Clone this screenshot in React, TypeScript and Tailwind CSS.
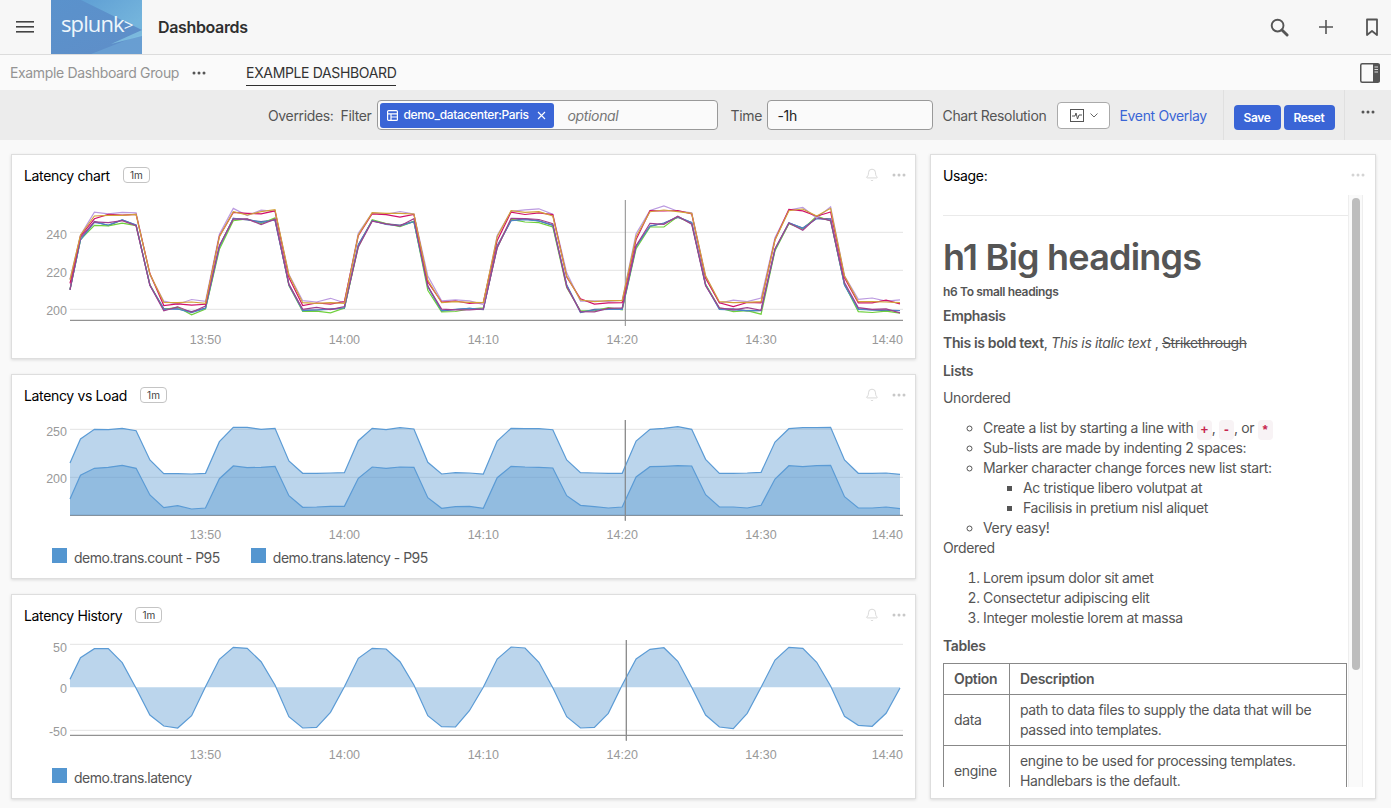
import { Bell } from "lucide-react";

const SANS = "font-['Inter','Noto_Sans',sans-serif] tracking-[-0.35px]";

// data is read off the picture, in page pixels (y), one value per minute
const xAt = (i: number) => (i === 0 ? 70 : 80.5 + (i - 1) * 13.89);
const toPoints = (ys: number[]) => ys.map((y, i) => `${xAt(i).toFixed(1)},${y}`).join(" ");
const toArea = (ys: number[], base: number) =>
  `${xAt(0)},${base} ${toPoints(ys)} ${xAt(ys.length - 1).toFixed(1)},${base}`;

const goldLine = [
  280, 235, 216, 215.3, 215.3, 214.3, 274, 302.3, 302.7, 302, 303.3, 236.7, 211.7, 215, 211.7, 209.7, 275, 302.7, 303.3,
  302.7, 303.3, 235, 212.7, 213.3, 213.3, 214, 280, 302.7, 301.7, 302.3, 302.7, 236.7, 210.7, 212.3, 211.7, 216, 276,
  300, 301.7, 300.7, 300.7, 236.7, 211.7, 210, 211.7, 213.3, 276, 301.7, 302.7, 302.3, 301.7, 240, 210.7, 209, 216,
  208.3, 276, 301.7, 301.7, 302, 302.7,
];
const blueLine = [
  290, 240, 222.3, 225, 220, 225, 285, 309.3, 309, 312.7, 308.3, 246.7, 218.3, 219.3, 222.3, 220, 285, 310.7, 310,
  309.3, 307.7, 245, 220.7, 224.3, 226, 221.7, 286.7, 310.7, 309.3, 308.3, 309.3, 246.7, 220.7, 219.7, 221, 225, 285,
  312, 310, 309.3, 309.3, 246.7, 226, 223.3, 216.7, 222.7, 285, 309.3, 310, 310.7, 310.7, 249.3, 222.7, 228.3, 218.3,
  220, 285, 309.3, 310, 310, 310.7,
];
const jitter = (ys: number[], seed: number, amp: number, shift: number) =>
  ys.map((y, i) => +(y + shift + Math.sin(i * 1.7 + seed) * Math.cos(i * 0.9 + seed * 2) * amp).toFixed(1));

const latencySeries = [
  { color: "#5a5f96", ys: jitter(blueLine, 2, 1, -0.2) },
  { color: "#6fd03c", ys: jitter(blueLine, 1, 3, 0.8) },
  { color: "#4a86c8", ys: blueLine },
  { color: "#a0408f", ys: jitter(blueLine, 3, 2.8, -0.4) },
  { color: "#bb9ae0", ys: jitter(goldLine, 4, 3.2, -1.2) },
  { color: "#d0106a", ys: jitter(goldLine, 5, 3, 1) },
  { color: "#d2a23a", ys: goldLine },
];

const countLine = [
  463, 439, 429.3, 429.7, 428.3, 430.7, 460, 473.7, 473.7, 474, 473.3, 441.7, 427.3, 427.3, 429.3, 428.3, 461, 473.3,
  473.3, 473, 472.7, 440.7, 428.3, 429.7, 427.7, 429, 462.3, 474, 472.7, 473, 474, 441, 428.3, 428.7, 428.7, 429.7,
  460, 472.7, 473, 473.3, 473.3, 441, 429.3, 428.3, 426.7, 429.3, 459.3, 473.3, 473.3, 473, 472.3, 442, 428.7, 427.7,
  427.7, 427.3, 460, 473.3, 473.3, 473, 474.3,
];
const transLine = [
  499, 475.3, 468.3, 467.3, 465.3, 468.3, 495, 507.7, 505.7, 509, 508, 478.7, 466, 467.7, 467.3, 466.3, 495.7, 507.3,
  507, 506.3, 506.3, 478.3, 467, 468.3, 467, 467.3, 497.7, 508.3, 506.7, 506.3, 508.3, 477.7, 466.3, 467, 467.3, 468,
  495.7, 505.3, 506.7, 508, 507, 477, 466.7, 466.3, 465.7, 466, 494.7, 507, 507, 508, 505.3, 479, 465.7, 466.7, 465.7,
  465.3, 496.7, 508, 508, 507, 508.7,
];
const historyLine = [
  679.3, 657.7, 648.7, 648.7, 662.7, 688.3, 715, 726, 728, 715.7, 686.7, 659.3, 647.3, 648.3, 661.7, 685, 716.7, 728,
  727.3, 712.3, 686.7, 658.3, 648.3, 649, 661.7, 685, 715.7, 726.7, 727, 710.7, 687.3, 659, 647, 648, 662.3, 687.7,
  716.7, 728, 727.3, 713.3, 685, 659, 649.3, 647.7, 661.3, 687.3, 715, 727, 728.7, 713.3, 687.3, 660, 647.3, 648.3,
  662.3, 686, 716.3, 725.3, 726.3, 713.3, 688,
];

const timeTicks = [
  { x: 205.5, label: "13:50" },
  { x: 344.4, label: "14:00" },
  { x: 483.3, label: "14:10" },
  { x: 622.2, label: "14:20" },
  { x: 761, label: "14:30" },
];

function Dots({ className }: { className: string }) {
  return (
    <svg width="14" height="4" viewBox="0 0 14 4" className={className} fill="currentColor">
      <circle cx="2" cy="2" r="1.5" />
      <circle cx="7" cy="2" r="1.5" />
      <circle cx="12" cy="2" r="1.5" />
    </svg>
  );
}

function Axes({ gridYs, labels, axisY, timeY, cursorX, cursorTop, cursorBottom }: {
  gridYs: number[];
  labels: { y: number; text: string }[];
  axisY: number;
  timeY: number;
  cursorX: number;
  cursorTop: number;
  cursorBottom: number;
}) {
  return (
    <g className="font-['Liberation_Sans',sans-serif] text-[12.5px] tracking-normal" fill="#999">
      {gridYs.map((y) => (
        <line key={y} x1="70" x2="903" y1={y} y2={y} stroke="#e3e3e3" />
      ))}
      <line x1="70" x2="903" y1={axisY} y2={axisY} stroke="#777" />
      <line x1={cursorX} x2={cursorX} y1={cursorTop} y2={cursorBottom} stroke="#8a8a8a" />
      {labels.map((l) => (
        <text key={l.text} x="67" y={l.y} textAnchor="end">
          {l.text}
        </text>
      ))}
      {timeTicks.map((t) => (
        <text key={t.label} x={t.x} y={timeY} textAnchor="middle">
          {t.label}
        </text>
      ))}
      <text x="903" y={timeY} textAnchor="end">
        14:40
      </text>
    </g>
  );
}

function CardTitle({ title, badge }: { title: string; badge: string }) {
  return (
    <div className="flex h-10 shrink-0 items-center pl-3 pr-[9px]">
      <span className="text-[14px] text-[#000]">{title}</span>
      <span className="ml-[13px] flex h-4 w-[27px] items-center justify-center rounded-[4px] border border-[#c4c4c4] text-[10px] tracking-normal text-[#444]">
        {badge}
      </span>
      <Bell size={14} strokeWidth={1.2} className="ml-auto mr-[13px] text-[#c8c8c8]" />
      <Dots className="text-[#c8c8c8]" />
    </div>
  );
}

function Legend({ items }: { items: string[] }) {
  return (
    <div className="flex gap-[31px] pl-10 pt-[3px]">
      {items.map((item) => (
        <div key={item} className="flex h-[15px] items-center gap-[7px] text-[14px] tracking-[-0.5px] text-[#555]">
          <span className="h-[15px] w-[15px] bg-[#5496d0]" />
          <span className="mt-[3px]">{item}</span>
        </div>
      ))}
    </div>
  );
}

function Card({ children }: { children: React.ReactNode }) {
  return (
    <section className="flex h-[205px] flex-col border border-[#dedede] bg-white shadow-[0_1px_3px_rgba(0,0,0,0.13)]">
      {children}
    </section>
  );
}

function Code({ children }: { children: string }) {
  return (
    <code className="rounded-[4px] bg-[#f8f3f5] px-[3.5px] py-[2.5px] font-['Liberation_Mono',monospace] text-[13px] font-bold leading-[14px] tracking-normal text-[#c7254e]">
      {children}
    </code>
  );
}

export default function App() {
  return (
    <div className={`flex h-[808px] w-[1391px] flex-col overflow-hidden bg-[#f9f9f9] ${SANS}`}>
      {/* top nav */}
      <header className="flex h-[55px] shrink-0 items-center border-b border-[#dcdcdc] bg-[#f7f7f7]">
        <svg width="18" height="12" viewBox="0 0 18 12" className="ml-4 text-[#444]" fill="currentColor">
          <rect width="18" height="1.6" />
          <rect y="5" width="18" height="1.6" />
          <rect y="10" width="18" height="1.6" />
        </svg>
        <svg width="91" height="54" viewBox="0 0 91 54" className="ml-[17px] self-start">
          <defs>
            <linearGradient id="logoBg" x1="0" y1="0" x2="1" y2="1">
              <stop offset="0" stopColor="#5a92cc" />
              <stop offset="1" stopColor="#5f8ec8" />
            </linearGradient>
            <linearGradient id="logoRay" x1="0" y1="0" x2="1" y2="0.6">
              <stop offset="0" stopColor="#5f9fd4" />
              <stop offset="1" stopColor="#74b4dc" />
            </linearGradient>
          </defs>
          <rect width="91" height="54" fill="url(#logoBg)" />
          <polygon points="30,0 91,0 91,30" fill="url(#logoRay)" />
          <polygon points="91,34 91,54 40,54" fill="#6fa9d8" opacity="0.6" />
          <polygon points="91,36 60,44 91,30" fill="#82c3e2" opacity="0.8" />
          <text x="10" y="32" className="font-['Open_Sans',sans-serif] text-[22px]" fill="#eef6fb" letterSpacing="-0.9">
            splunk<tspan fontSize="17" dy="-1">&gt;</tspan>
          </text>
        </svg>
        <span className="ml-4 text-[16px] font-semibold text-[#2f2f2f]">Dashboards</span>
        <div className="ml-auto flex items-center text-[#555]">
          <svg width="19" height="19" viewBox="0 0 20 20" className="-ml-px" fill="none" stroke="currentColor">
            <circle cx="8" cy="8" r="6.2" strokeWidth="2" />
            <path d="M12.6 12.6 18 18" strokeWidth="3" strokeLinecap="round" />
          </svg>
          <svg width="16" height="16" viewBox="0 0 16 16" className="ml-[29px]" stroke="currentColor" strokeWidth="1.6">
            <path d="M8 1v14M1 8h14" />
          </svg>
          <svg width="14" height="19" viewBox="0 0 14 19" className="ml-[31px] mr-3" fill="none" stroke="currentColor" strokeWidth="1.8">
            <path d="M2 1.5h10v15.5l-5-4-5 4z" strokeLinejoin="round" />
          </svg>
        </div>
      </header>

      {/* dashboard tabs */}
      <nav className="flex h-[35px] shrink-0 items-start bg-[#fafafa] pl-[10px]">
        <span className="mt-2 text-[14px] leading-5 text-[#949494]">Example Dashboard Group</span>
        <Dots className="ml-[13px] mt-4 text-[#555]" />
        <span className="ml-[40px] mt-2 border-b-[1.5px] border-[#2f2f2f] pb-[2px] text-[14px] leading-5 text-[#333]">
          EXAMPLE DASHBOARD
        </span>
        <svg width="20" height="20" viewBox="0 0 20 20" className="ml-auto mr-[11px] mt-2 text-[#555]">
          <rect x="0.75" y="0.75" width="18.5" height="18.5" rx="1.5" fill="none" stroke="currentColor" strokeWidth="1.5" />
          <rect x="13" y="1" width="6.5" height="18" fill="currentColor" />
          <path d="M14.5 4h3.5M14.5 6.5h3.500M14.500 9h3.500" stroke="#ddd" />
        </svg>
      </nav>

      {/* overrides bar */}
      <div className="flex h-[50px] shrink-0 items-center whitespace-nowrap bg-[#ececec] text-[14px] text-[#555]">
        <span className="ml-[268px]">Overrides:</span>
        <span className="ml-[7px]">Filter</span>
        <div className="ml-[5px] flex h-[30px] w-[341px] items-center rounded-[4px] border border-[#999] bg-[#fafafa] pl-[2px]">
          <div className="flex h-[25px] w-[174px] items-center rounded-[3px] bg-[#3a65d6] pl-[7px] text-[12px] font-medium text-white">
            <svg width="11" height="11" viewBox="0 0 11 11" fill="none" stroke="currentColor" strokeWidth="1.2">
              <rect x="0.6" y="0.6" width="9.8" height="9.8" rx="1" />
              <path d="M0.6 3.8h9.8M4 3.8v6.6M4 7h6.4" />
            </svg>
            <span className="ml-[6px]">demo_datacenter:Paris</span>
            <svg width="9" height="9" viewBox="0 0 9 9" className="ml-auto mr-2" stroke="currentColor" strokeWidth="1.1">
              <path d="M1 1l7 7M8 1 1 8" />
            </svg>
          </div>
          <span className="ml-[14px] italic text-[#777]">optional</span>
        </div>
        <span className="ml-[13px] w-[31px]">Time</span>
        <div className="ml-[5px] flex h-[30px] w-[166px] items-center rounded-[4px] border border-[#999] bg-[#fafafa] pl-[10px] text-[#222]">
          -1h
        </div>
        <span className="ml-[10px] w-[106px]">Chart Resolution</span>
        <div className="ml-2 flex h-[27px] w-[53px] items-center rounded-[4px] border border-[#aaa] bg-white pl-3">
          <svg width="14" height="13" viewBox="0 0 14 13" fill="none" stroke="#555">
            <rect x="0.5" y="0.5" width="13" height="12" />
            <path d="M2 7h3l1-3 1.500 6L9 6h3" />
          </svg>
          <svg width="8" height="5" viewBox="0 0 8 5" className="ml-[6px]" fill="none" stroke="#666">
            <path d="M0.500 0.500 4 4l3.500-3.500" />
          </svg>
        </div>
        <span className="ml-[10px] w-[86px] text-[#3a65d6]">Event Overlay</span>
        <div className="ml-[17px] flex h-full items-center border-x border-[#e0e0e0] pl-[10px] pr-[9px] pt-[5px]">
          <button className="h-[25px] w-[47px] rounded-[4px] bg-[#3a65d6] text-[12px] font-semibold text-white">Save</button>
          <button className="ml-[3px] h-[25px] w-[51px] rounded-[4px] bg-[#3a65d6] text-[12px] font-semibold text-white">Reset</button>
        </div>
        <Dots className="ml-[16px] -mt-[6px] text-[#555]" />
      </div>

      {/* panels */}
      <main className="flex min-h-0 flex-1 gap-[14px] pl-[11px] pt-[14px]">
        <div className="flex w-[905px] flex-col gap-[15px]">
          <Card>
            <CardTitle title="Latency chart" badge="1m" />
            <svg width="903" height="160" viewBox="12 195 903 160">
              <Axes
                gridYs={[232.3, 270.3, 309.3]}
                labels={[
                  { y: 238.5, text: "240" },
                  { y: 276.5, text: "220" },
                  { y: 315, text: "200" },
                ]}
                axisY={320.3}
                timeY={344}
                cursorX={625.3}
                cursorTop={200}
                cursorBottom={326}
              />
              {latencySeries.map((s) => (
                <polyline key={s.color} points={toPoints(s.ys)} fill="none" stroke={s.color} strokeWidth="1.2" />
              ))}
            </svg>
          </Card>

          <Card>
            <CardTitle title="Latency vs Load" badge="1m" />
            <svg width="903" height="130" viewBox="12 415 903 130">
              <Axes
                gridYs={[429.3, 477.3]}
                labels={[
                  { y: 436, text: "250" },
                  { y: 483, text: "200" },
                ]}
                axisY={515.3}
                timeY={539}
                cursorX={625.3}
                cursorTop={420}
                cursorBottom={520.7}
              />
              <polygon points={toArea(countLine, 515.3)} fill="#5496d0" fillOpacity="0.4" />
              <polygon points={toArea(transLine, 515.3)} fill="#5496d0" fillOpacity="0.4" />
              <polyline points={toPoints(countLine)} fill="none" stroke="#5b9bd5" strokeWidth="1.2" />
              <polyline points={toPoints(transLine)} fill="none" stroke="#5b9bd5" strokeWidth="1.2" />
              <line x1="625.3" x2="625.3" y1="420" y2="520.7" stroke="#8a8a8a" />
            </svg>
            <Legend items={["demo.trans.count - P95", "demo.trans.latency - P95"]} />
          </Card>

          <Card>
            <CardTitle title="Latency History" badge="1m" />
            <svg width="903" height="130" viewBox="12 635 903 130">
              <Axes
                gridYs={[644.3, 730.3]}
                labels={[
                  { y: 652, text: "50" },
                  { y: 693, text: "0" },
                  { y: 736, text: "-50" },
                ]}
                axisY={735.3}
                timeY={759}
                cursorX={626.3}
                cursorTop={640}
                cursorBottom={740.7}
              />
              <polygon points={toArea(historyLine, 687.3)} fill="#5496d0" fillOpacity="0.4" />
              <polyline points={toPoints(historyLine)} fill="none" stroke="#5b9bd5" strokeWidth="1.2" />
              <line x1="626.3" x2="626.3" y1="640" y2="740.7" stroke="#8a8a8a" />
            </svg>
            <Legend items={["demo.trans.latency"]} />
          </Card>
        </div>

        {/* usage text panel */}
        <section className="flex h-[645px] w-[446px] flex-col border border-[#dedede] bg-white shadow-[0_1px_3px_rgba(0,0,0,0.13)]">
          <div className="flex h-10 shrink-0 items-center justify-between pl-3 pr-[10px]">
            <span className="text-[14px] text-[#000]">Usage:</span>
            <Dots className="text-[#d4d4d4]" />
          </div>
          <div className="flex h-[592px] pl-3">
            <div className="w-[405px] overflow-hidden text-[14px] leading-5 text-[#555]">
              <hr className="mt-5 border-[#eaeaea]" />
              <h1 className="mt-[19px] text-[36px] font-semibold leading-[44px] tracking-[-0.8px]">h1 Big headings</h1>
              <h6 className="mt-[5px] text-[12px] font-semibold leading-4">h6 To small headings</h6>
              <p className="mt-[6px] font-semibold">Emphasis</p>
              <p className="mt-[7px]">
                <strong className="font-semibold">This is bold text</strong>, <em>This is italic text</em> , <s>Strikethrough</s>
              </p>
              <p className="mt-2 font-semibold">Lists</p>
              <p className="mt-[7px]">Unordered</p>
              <ul className="mt-[10px] list-[circle] pl-10">
                <li>
                  Create a list by starting a line with <Code>+</Code>, <Code>-</Code>, or <Code>*</Code>
                </li>
                <li>Sub-lists are made by indenting 2 spaces:</li>
                <li>
                  Marker character change forces new list start:
                  <ul className="list-[square] pl-10">
                    <li>Ac tristique libero volutpat at</li>
                    <li>Facilisis in pretium nisl aliquet</li>
                  </ul>
                </li>
                <li>Very easy!</li>
              </ul>
              <p>Ordered</p>
              <ol className="mt-[10px] list-decimal pl-10">
                <li>Lorem ipsum dolor sit amet</li>
                <li>Consectetur adipiscing elit</li>
                <li>Integer molestie lorem at massa</li>
              </ol>
              <p className="mt-2 font-semibold">Tables</p>
              <table className="mt-[7px] w-[404px] table-fixed border-collapse">
                <thead>
                  <tr>
                    <th className="w-[66px] border border-[#888] px-[10px] py-[5px] text-left font-semibold">Option</th>
                    <th className="border border-[#888] px-[10px] py-[5px] text-left font-semibold">Description</th>
                  </tr>
                </thead>
                <tbody>
                  <tr>
                    <td className="border border-[#888] px-[10px] py-[5px]">data</td>
                    <td className="border border-[#888] px-[10px] py-[5px]">
                      path to data files to supply the data that will be passed into templates.
                    </td>
                  </tr>
                  <tr>
                    <td className="border border-[#888] px-[10px] py-[5px]">engine</td>
                    <td className="border border-[#888] px-[10px] py-[5px]">
                      engine to be used for processing templates. Handlebars is the default.
                    </td>
                  </tr>
                </tbody>
              </table>
            </div>
            <div className="h-full w-[15px] shrink-0 border-x border-[#eeeeee] bg-[#fafafa] pl-[3px] pt-[3px]">
              <div className="h-[472px] w-2 rounded-[4px] bg-[#bdbdbd]" />
            </div>
          </div>
        </section>
      </main>
    </div>
  );
}
